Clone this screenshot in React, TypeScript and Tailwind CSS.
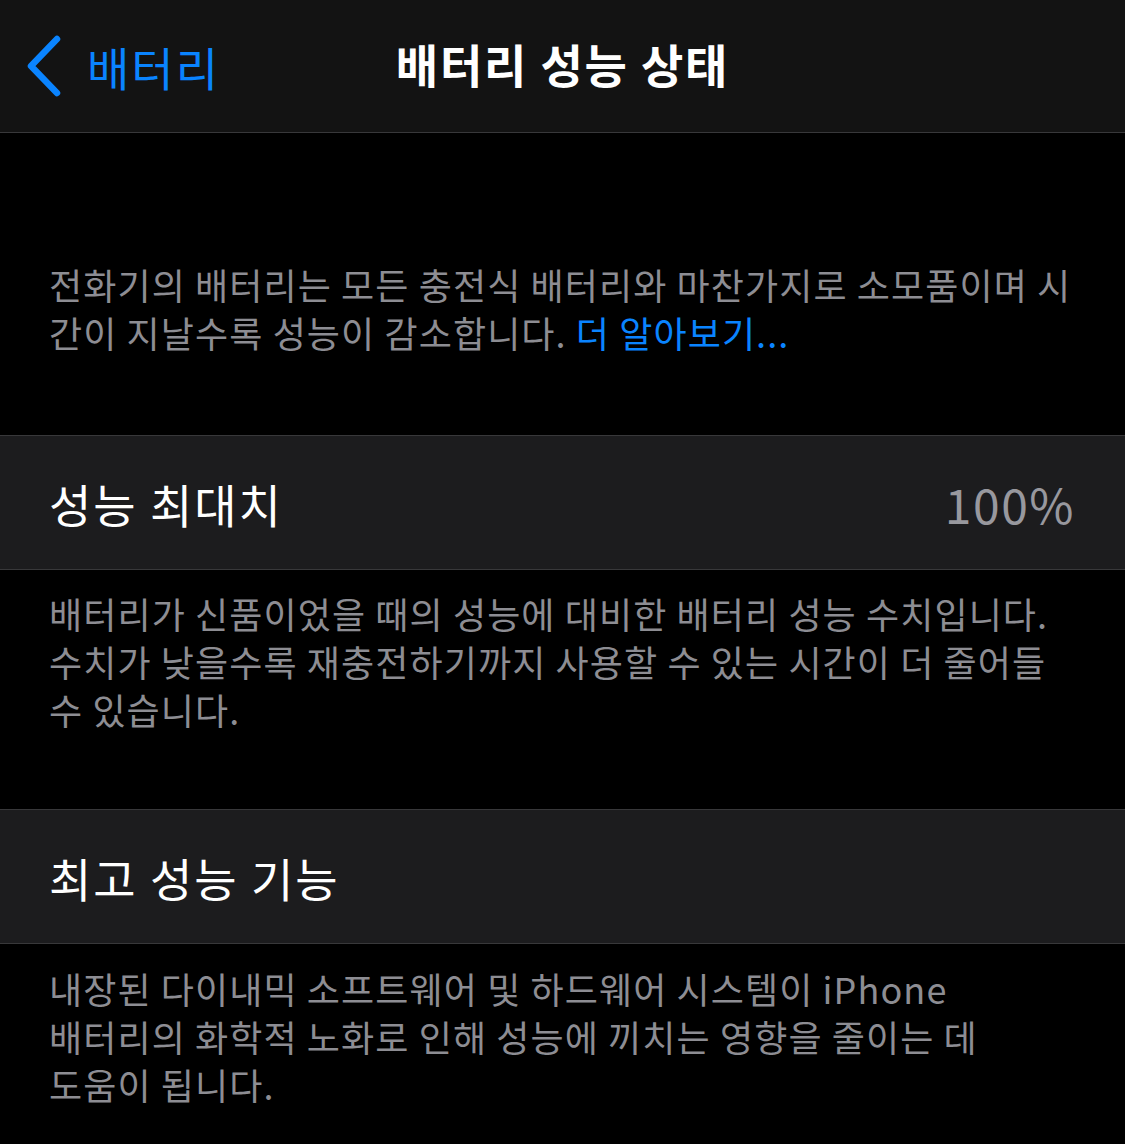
const font = { fontFamily: '"Noto Sans CJK KR", "Noto Sans", sans-serif' }

function Cell({ label, value }: { label: string; value?: string }) {
    return (
        <div className="flex h-[135px] items-center justify-between border-y border-[#38383a] bg-[#1c1c1e] pl-[49px] pr-[50px]">
            <span className="text-[46px] leading-none tracking-[2px] text-white">{label}</span>
            {value && <span className="text-[48px] leading-none tracking-[1.5px] text-[#98989e]">{value}</span>}
        </div>
    )
}

function Footer({ children, top, bottom }: { children: React.ReactNode; top: string; bottom: string }) {
    return (
        <p className={`whitespace-nowrap px-[49px] text-[36px] leading-[48px] tracking-[1.1px] text-[#8d8d93] ${top} ${bottom}`}>
            {children}
        </p>
    )
}

export default function App() {
    return (
        <div className="min-h-[1144px] bg-black" style={font}>

            {/* NAV BAR */}
            <header className="relative flex h-[133px] items-center justify-center border-b border-[#38383a] bg-[#131313]">
                <div className="absolute left-[24px] top-0 flex h-full items-center gap-[23px] text-[#0a84ff]">
                    <svg width="40" height="62" viewBox="0 0 40 62" fill="none">
                        <path d="M33 4 L7 31 L33 58" stroke="currentColor" strokeWidth="6.5" strokeLinecap="round" strokeLinejoin="round" />
                    </svg>
                    <span className="text-[46px] leading-none tracking-[2px]">배터리</span>
                </div>
                <h1 className="-mt-[6px] text-[46px] font-bold leading-none tracking-[1.8px] text-white">배터리 성능 상태</h1>
            </header>

            <Footer top="pt-[127px]" bottom="pb-[79px]">
                전화기의 배터리는 모든 충전식 배터리와 마찬가지로 소모품이며 시<br />
                간이 지날수록 성능이 감소합니다. <span className="text-[#0a84ff]">더 알아보기...</span>
            </Footer>

            <Cell label="성능 최대치" value="100%" />

            <Footer top="pt-[19px]" bottom="pb-[76px]">
                배터리가 신품이었을 때의 성능에 대비한 배터리 성능 수치입니다.<br />
                수치가 낮을수록 재충전하기까지 사용할 수 있는 시간이 더 줄어들<br />
                수 있습니다.
            </Footer>

            <Cell label="최고 성능 기능" />

            <Footer top="pt-[20px]" bottom="pb-[36px]">
                내장된 다이내믹 소프트웨어 및 하드웨어 시스템이 iPhone<br />
                배터리의 화학적 노화로 인해 성능에 끼치는 영향을 줄이는 데<br />
                도움이 됩니다.
            </Footer>
        </div>
    )
}
